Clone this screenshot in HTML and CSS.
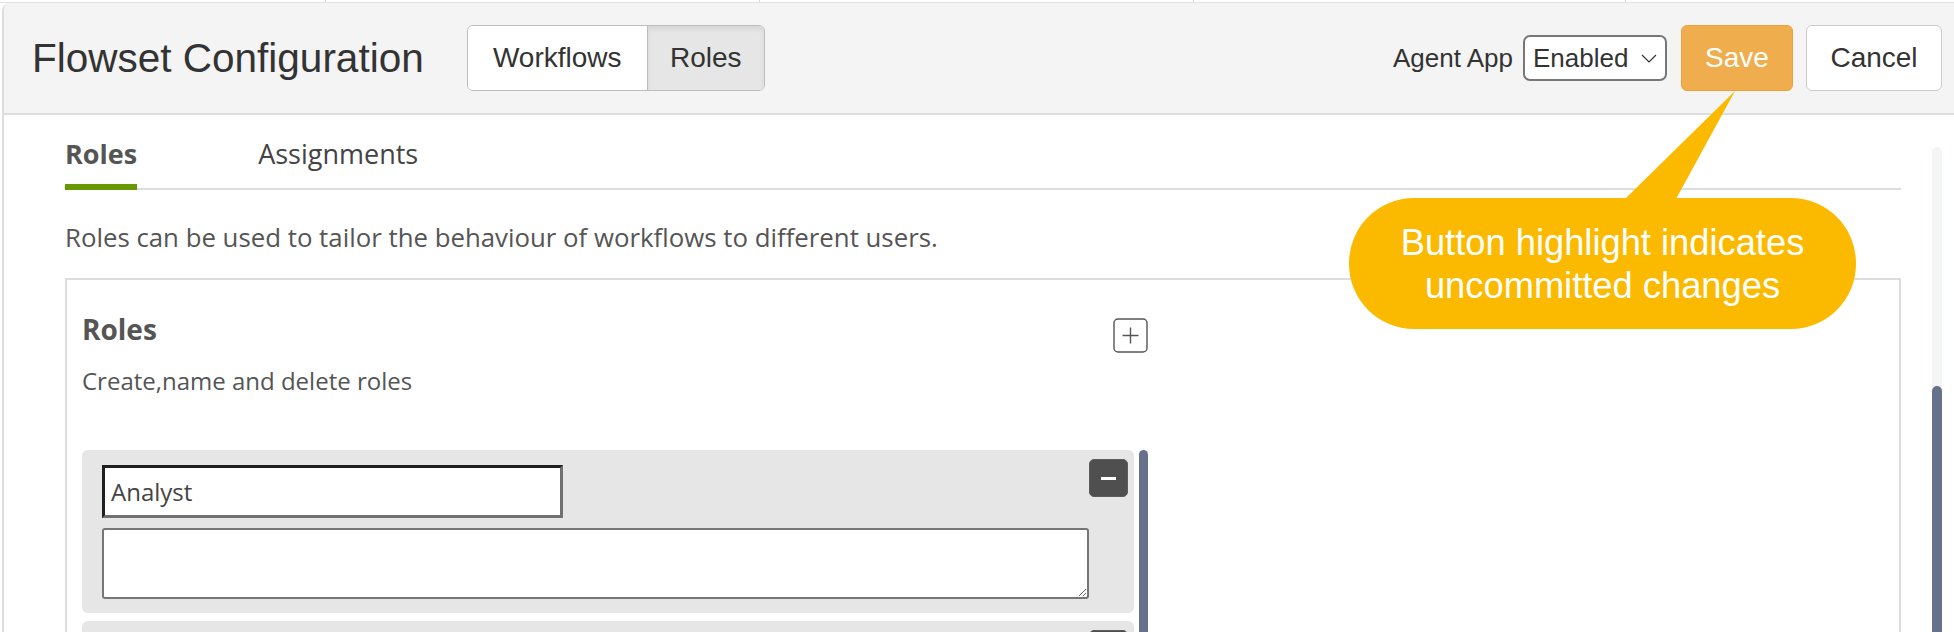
FILE: index.html
```html
<!DOCTYPE html>
<html lang="en">
<head>
<meta charset="utf-8">
<title>Flowset Configuration</title>
<link rel="stylesheet" href="styles.css">
</head>
<body>
<div class="topstrip">
  <div class="strip-cell w1"></div>
  <div class="strip-cell w2"></div>
  <div class="strip-cell w2"></div>
  <div class="strip-cell w3"></div>
  <div class="strip-cell rest"></div>
</div>
<div class="panel">
  <header class="header">
    <h1 class="title">Flowset Configuration</h1>
    <div class="seg">
      <button class="seg-btn seg-workflows">Workflows</button>
      <button class="seg-btn seg-roles active">Roles</button>
    </div>
    <div class="actions">
      <span class="agent-label">Agent App</span>
      <div class="select">
        <span>Enabled</span>
        <svg class="chevron" width="16" height="9" viewBox="0 0 16 9"><polyline points="1,1 8,8 15,1" fill="none" stroke="#333" stroke-width="1.2"/></svg>
      </div>
      <button class="btn btn-save">Save</button>
      <button class="btn btn-cancel">Cancel</button>
    </div>
  </header>
  <div class="body">
    <main class="main">
      <nav class="tabs">
        <span class="tab active">Roles</span>
        <span class="tab">Assignments</span>
      </nav>
      <p class="intro">Roles can be used to tailor the behaviour of workflows to different users.</p>
      <section class="card">
        <div class="roles-col">
          <div class="roles-head">
            <h2 class="roles-title">Roles</h2>
            <button class="add-btn" aria-label="Add role">
              <svg width="35" height="35" viewBox="0 0 35 35"><rect x="1" y="1" width="33" height="33" rx="4" fill="none" stroke="#555" stroke-width="1.4"/><path d="M17.5 9.5V25.5M9.5 17.5H25.5" stroke="#555" stroke-width="1.4" fill="none"/></svg>
            </button>
          </div>
          <p class="roles-desc">Create,name and delete roles</p>
          <div class="roles-list">
            <div class="items">
              <div class="item">
                <div class="item-row">
                  <input class="name" type="text" value="Analyst">
                  <button class="remove" aria-label="Remove role"><span class="bar"></span></button>
                </div>
                <textarea class="desc"></textarea>
              </div>
              <div class="item">
                <div class="item-row">
                  <input class="name" type="text" value="">
                  <button class="remove" aria-label="Remove role"><span class="bar"></span></button>
                </div>
                <textarea class="desc"></textarea>
              </div>
            </div>
            <div class="list-scroll"></div>
          </div>
        </div>
      </section>
    </main>
    <div class="vscroll"><div class="thumb"></div></div>
  </div>
</div>
<div class="callout">
  <svg class="callout-tail" width="111" height="108" viewBox="0 0 111 108"><polygon points="0,108 51,108 110,0" fill="#fbba00"/></svg>
  <span class="callout-text">Button highlight indicates<br>uncommitted changes</span>
</div>
</body>
</html>
```

FILE: styles.css
```css
html, body {
  margin: 0;
  padding: 0;
}
body {
  width: 1954px;
  height: 632px;
  overflow: hidden;
  background: #fff;
  position: relative;
  font-family: "Open Sans", "Noto Sans", sans-serif;
  color: #555;
}

/* strip of the table above */
.topstrip {
  display: flex;
  height: 2px;
  border-bottom: 1px solid #e2e2e2;
}
.strip-cell {
  border-right: 1px solid #dcdcdc;
}
.strip-cell.w1 { width: 325px; }
.strip-cell.w2 { width: 433px; }
.strip-cell.w3 { width: 431px; }
.strip-cell.rest { flex: 1; border-right: none; }

.panel {
  margin-left: 2px;
  border-left: 2px solid #dddddd;
  border-top-left-radius: 8px;
}

/* header */
.header {
  display: flex;
  align-items: center;
  height: 110px;
  padding: 0 12px 0 28px;
  background: #f4f4f4;
  border-bottom: 2px solid #dddddd;
  border-top-left-radius: 6px;
  font-family: "Liberation Sans", Arial, sans-serif;
  color: #333;
}
.title {
  margin: 0;
  font-size: 40.5px;
  font-weight: 400;
  line-height: 1;
  color: #333;
}
.seg {
  display: flex;
  margin-left: 43px;
  border: 1px solid #bdbdbd;
  border-radius: 6px;
  overflow: hidden;
  background: #fff;
}
.seg-btn {
  height: 64px;
  border: none;
  margin: 0;
  padding: 0;
  background: #fff;
  font-family: "Liberation Sans", Arial, sans-serif;
  font-size: 28px;
  color: #333;
}
.seg-workflows { width: 179px; }
.seg-roles {
  width: 117px;
  border-left: 1px solid #bdbdbd;
}
.seg-btn.active {
  background: #e6e6e6;
  box-shadow: inset 0 3px 5px rgba(0, 0, 0, 0.08);
}
.actions {
  display: flex;
  align-items: center;
  margin-left: auto;
}
.agent-label {
  font-size: 26px;
  color: #333;
  margin-right: 10px;
}
.select {
  box-sizing: border-box;
  width: 144px;
  height: 46px;
  display: flex;
  align-items: center;
  justify-content: space-between;
  padding: 0 8px 0 8px;
  background: #fff;
  border: 2px solid #777;
  border-radius: 7px;
  font-size: 26px;
  color: #333;
}
.chevron { display: block; }
.btn {
  box-sizing: border-box;
  height: 66px;
  border-radius: 6px;
  font-family: "Liberation Sans", Arial, sans-serif;
  font-size: 28px;
  padding: 0;
}
.btn-save {
  width: 112px;
  margin-left: 14px;
  background: #f0ad4e;
  border: 1px solid #eea236;
  color: #fff;
}
.btn-cancel {
  width: 136px;
  margin-left: 13px;
  background: #fff;
  border: 1px solid #cccccc;
  color: #333;
}

/* body */
.body {
  display: flex;
}
.main {
  flex: 1;
  padding: 21px 0 0 61px;
}
.vscroll {
  width: 10px;
  margin: 32px 12px 0 31px;
  background: #f4f5f5;
  border-radius: 5px;
}
.thumb {
  margin-top: 239px;
  height: 300px;
  background: #66728b;
  border-radius: 5px;
}

.tabs {
  display: flex;
  gap: 121px;
  border-bottom: 2px solid #dddddd;
}
.tab {
  font-size: 27px;
  line-height: 36px;
  padding-bottom: 12px;
  border-bottom: 6px solid transparent;
  margin-bottom: -2px;
  color: #444;
  font-weight: 500;
}
.tab.active {
  border-bottom-color: #669900;
  font-weight: 700;
  color: #555;
}
.intro {
  margin: 30px 0 23px;
  font-size: 25.8px;
  line-height: 35px;
  color: #555;
}

.card {
  border: 2px solid #dddddd;
  border-bottom: none;
  padding: 38px 0 0 15px;
}
.roles-col {
  width: 1066px;
}
.roles-head {
  display: flex;
  justify-content: space-between;
  align-items: flex-start;
  height: 35px;
}
.roles-title {
  margin: -3px 0 0;
  font-size: 28px;
  line-height: 28px;
  font-weight: 700;
  color: #555;
}
.add-btn {
  width: 35px;
  height: 35px;
  padding: 0;
  border: none;
  background: transparent;
}
.add-btn svg { display: block; }
.roles-desc {
  margin: 11px 0 52px;
  font-size: 24px;
  line-height: 34px;
  color: #555;
}
.roles-list {
  display: flex;
  gap: 5px;
}
.items {
  flex: 1;
}
.list-scroll {
  width: 9px;
  background: #66728b;
  border-radius: 5px 5px 0 0;
}
.item {
  background: #e6e6e6;
  border-radius: 6px;
  padding: 15px 6px 14px 20px;
  margin-bottom: 8px;
}
.item-row {
  display: flex;
  justify-content: space-between;
  align-items: flex-start;
}
.name {
  box-sizing: border-box;
  width: 461px;
  height: 53px;
  margin: 0;
  padding: 0 6px;
  border-style: solid;
  border-width: 3px;
  border-color: #1f1f1f #707070 #707070 #1f1f1f;
  background: #fff;
  font-family: "Open Sans", "Noto Sans", sans-serif;
  font-size: 24px;
  color: #444;
  outline: none;
}
.remove {
  box-sizing: border-box;
  width: 39px;
  height: 38px;
  margin-top: -6px;
  padding: 0;
  background: #4f4f4f;
  border: 1px solid #5c5c5c;
  border-radius: 5px;
  display: flex;
  align-items: center;
  justify-content: center;
}
.bar {
  display: block;
  width: 15px;
  height: 3px;
  background: #fff;
}
.desc {
  display: block;
  box-sizing: border-box;
  width: 987px;
  height: 71px;
  margin: 10px 0 0;
  border: 2px solid #767676;
  border-radius: 3px;
  background: #fff;
  font-family: "Open Sans", "Noto Sans", sans-serif;
  font-size: 24px;
}

/* annotation callout */
.callout {
  position: absolute;
  left: 1349px;
  top: 198px;
  width: 507px;
  height: 131px;
  background: #fbba00;
  border-radius: 65px;
  display: flex;
  align-items: center;
  justify-content: center;
  text-align: center;
}
.callout-tail {
  position: absolute;
  left: 276px;
  top: -107px;
}
.callout-text {
  position: relative;
  font-family: "Liberation Sans", Arial, sans-serif;
  font-size: 36.3px;
  line-height: 43px;
  color: #fff;
}
```
